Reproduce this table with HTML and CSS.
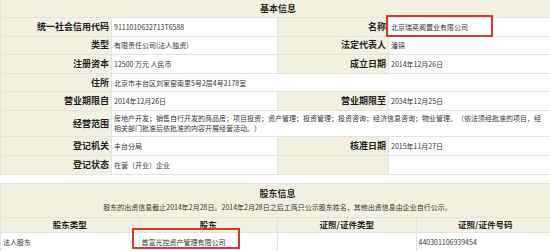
FILE: index.html
```html
<!DOCTYPE html>
<html lang="zh-CN">
<head>
<meta charset="utf-8">
<title>基本信息</title>
<link rel="stylesheet" href="styles.css">
</head>
<body>
<div class="page">
  <table class="info">
    <colgroup><col class="c1"><col class="c2"><col class="c3"><col class="c4"></colgroup>
    <tr class="title-row"><th colspan="4" class="title">基本信息</th></tr>
    <tr><th>统一社会信用代码</th><td>9111010632713T6588</td><th>名称</th><td>北京瑞奕阁置业有限公司</td></tr>
    <tr><th>类型</th><td>有限责任公司(法人独资)</td><th>法定代表人</th><td>潘锦</td></tr>
    <tr><th>注册资本</th><td>12500 万元 人民币</td><th>成立日期</th><td>2014年12月26日</td></tr>
    <tr><th>住所</th><td colspan="3">北京市丰台区刘家窑南里5号2层4号2178室</td></tr>
    <tr><th>营业期限自</th><td>2014年12月26日</td><th>营业期限至</th><td>2034年12月25日</td></tr>
    <tr class="tall"><th>经营范围</th><td colspan="3" class="scope">房地产开发；销售自行开发的商品房；项目投资；资产管理；投资管理；投资咨询；经济信息咨询；物业管理。（依法须经批准的项目，经相关部门批准后依批准的内容开展经营活动。）</td></tr>
    <tr><th>登记机关</th><td>丰台分局</td><th>核准日期</th><td>2015年11月27日</td></tr>
    <tr><th>登记状态</th><td>在营（开业）企业</td><th></th><td></td></tr>
  </table>

  <table class="holders">
    <tr class="holders-title"><th colspan="4" class="title">股东信息<div class="note">股东的出资信息截止2014年2月28日。2014年2月28日之后工商只公示股东姓名，其他出资信息由企业自行公示。</div></th></tr>
    <tr class="head"><th>股东类型</th><th>股东</th><th>证照/证件类型</th><th>证照/证件号码</th></tr>
    <tr class="data"><td>法人股东</td><td>首富光控资产管理有限公司</td><td></td><td>440301106939454</td></tr>
  </table>

  <div class="mark mark-name"></div>
  <div class="mark mark-holder"></div>
</div>
</body>
</html>
```

FILE: styles.css
```css
html, body {
  margin: 0;
  padding: 0;
  background: #ffffff;
}

body {
  font-family: "Noto Sans CJK SC", "Liberation Sans", sans-serif;
  color: #333333;
  text-spacing-trim: space-all;
}

.page {
  position: relative;
  width: 550px;
  height: 251px;
  overflow: hidden;
}

table {
  border-collapse: collapse;
  table-layout: fixed;
  width: 555px;
}

.info .c1 { width: 111px; }
.info .c2 { width: 166px; }
.info .c3 { width: 111px; }
.info .c4 { width: 167px; }

.info th,
.info td {
  border: 1px solid #e3e3e3;
  height: 17.6px;
  padding: 0 2px;
  vertical-align: middle;
}

.info th {
  background: #f2f1e1;
  color: #1f1f1f;
  font-size: 9px;
  font-weight: bold;
  line-height: 12px;
  text-align: right;
}

.info td {
  background: #ffffff;
  font-size: 7px;
  line-height: 10px;
  text-align: left;
}

.info .title-row th {
  height: 16px;
  text-align: center;
  border-top-color: #f2f1e1;
}

.info .tall th,
.info .tall td {
  height: 25.5px;
}

.info .scope {
  padding-right: 12px;
  line-height: 9.5px;
}

.holders {
  margin-top: 8px;
}

.holders th,
.holders td {
  border: 1px solid #e3e3e3;
  padding: 0 2px;
  vertical-align: middle;
}

.holders .title {
  background: #f2f1e1;
  color: #1f1f1f;
  font-size: 9px;
  font-weight: bold;
  line-height: 12px;
  text-align: center;
  height: 33px;
}

.holders .note {
  font-size: 7px;
  font-weight: normal;
  line-height: 10px;
  color: #333333;
  margin-top: 2px;
}

.holders .head th {
  background: #f2f1e1;
  color: #1f1f1f;
  font-size: 8.5px;
  font-weight: bold;
  line-height: 11px;
  height: 14px;
  text-align: center;
}

.holders .data td {
  background: #ffffff;
  font-size: 7px;
  line-height: 10px;
  height: 18px;
  text-align: left;
}

.mark {
  position: absolute;
  border: 2px solid #d8382c;
  box-sizing: border-box;
}

.mark-name {
  left: 386px;
  top: 15px;
  width: 107px;
  height: 22px;
}

.mark-holder {
  left: 132px;
  top: 228px;
  width: 108px;
  height: 21px;
}
```
